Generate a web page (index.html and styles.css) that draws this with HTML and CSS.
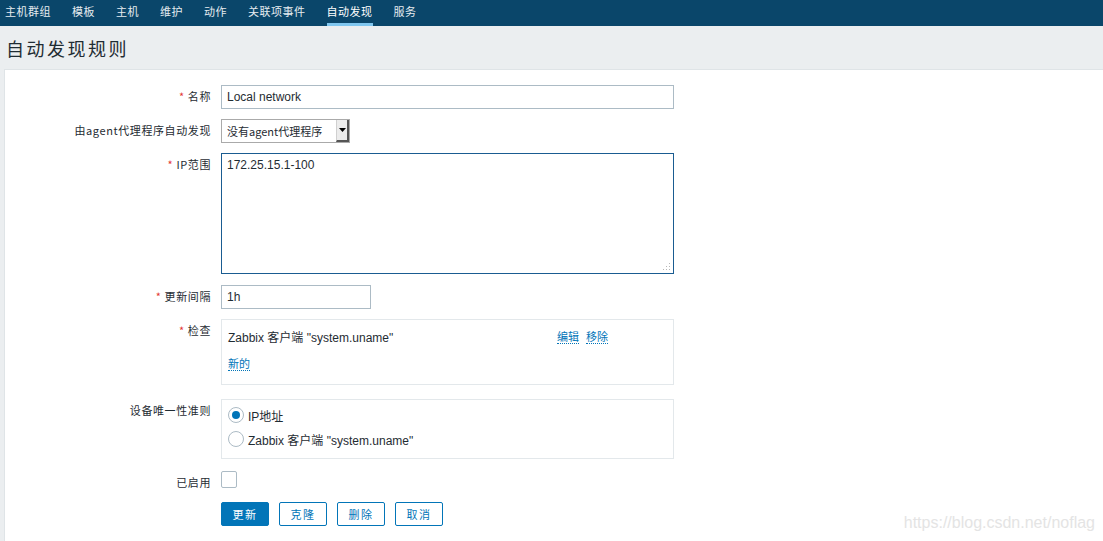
FILE: index.html
```html
<!DOCTYPE html>
<html lang="zh">
<head>
<meta charset="utf-8">
<title>自动发现规则</title>
<link rel="stylesheet" href="styles.css">
</head>
<body>
<nav class="topnav">
  <a class="nav-item">主机群组</a>
  <a class="nav-item">模板</a>
  <a class="nav-item">主机</a>
  <a class="nav-item">维护</a>
  <a class="nav-item">动作</a>
  <a class="nav-item">关联项事件</a>
  <a class="nav-item active">自动发现</a>
  <a class="nav-item">服务</a>
</nav>
<header class="page-header"><h1>自动发现规则</h1></header>
<main class="content">
  <form class="form">
    <label class="lbl"><span class="req">*</span> 名称</label>
    <div class="field"><input class="text wide" type="text" value="Local network"></div>

    <label class="lbl">由agent代理程序自动发现</label>
    <div class="field">
      <div class="select"><span class="select-val">没有agent代理程序</span><span class="select-btn"><svg width="7" height="4" viewBox="0 0 7 4"><path d="M0 0H7L3.5 4Z" fill="#000"/></svg></span></div>
    </div>

    <label class="lbl"><span class="req">*</span> IP范围</label>
    <div class="field"><div class="textarea">172.25.15.1-100<svg class="grip" width="8" height="8" viewBox="0 0 8 8"><g fill="#b8b8b8"><rect x="6" y="0" width="1" height="1"/><rect x="3" y="3" width="1" height="1"/><rect x="6" y="3" width="1" height="1"/><rect x="0" y="6" width="1" height="1"/><rect x="3" y="6" width="1" height="1"/><rect x="6" y="6" width="1" height="1"/></g></svg></div></div>

    <label class="lbl mt1"><span class="req">*</span> 更新间隔</label>
    <div class="field mt1"><input class="text short" type="text" value="1h"></div>

    <label class="lbl"><span class="req">*</span> 检查</label>
    <div class="field">
      <div class="box checks">
        <div class="check-row"><span class="check-name">Zabbix 客户端 "system.uname"</span><span class="links"><a class="link">编辑</a><a class="link">移除</a></span></div>
        <div class="check-row"><a class="link">新的</a></div>
      </div>
    </div>

    <label class="lbl mt4">设备唯一性准则</label>
    <div class="field mt4">
      <div class="box radios">
        <div class="radio-row"><span class="radio on"></span>IP地址</div>
        <div class="radio-row"><span class="radio"></span>Zabbix 客户端 "system.uname"</div>
      </div>
    </div>

    <label class="lbl mt2">已启用</label>
    <div class="field mt2"><span class="checkbox"></span></div>

    <div class="lbl"></div>
    <div class="field buttons">
      <button type="button" class="btn primary">更新</button>
      <button type="button" class="btn">克隆</button>
      <button type="button" class="btn">删除</button>
      <button type="button" class="btn">取消</button>
    </div>
  </form>
  <div class="watermark">https://blog.csdn.net/noflag</div>
</main>
</body>
</html>
```
FILE: styles.css
```css
* { box-sizing: border-box; }
html, body { margin: 0; padding: 0; }
body {
  background: #ebeef0;
  font-family: "Liberation Sans", "Noto Sans CJK SC", sans-serif;
  font-size: 12px;
  color: #1f2c33;
  height: 541px;
  overflow: hidden;
}
.topnav {
  height: 26px;
  background: #0a466a;
  display: flex;
  gap: 21px;
  padding-left: 5px;
}
.nav-item {
  color: #e6ecf0;
  font-family: "Noto Sans CJK SC", sans-serif;
  font-size: 11px;
  letter-spacing: 0.5px;
  line-height: 22px;
  height: 26px;
  border-bottom: 3px solid transparent;
}
.nav-item.active { color: #fff; border-bottom-color: #7fc6ef; }
.page-header {
  height: 43px;
  padding-left: 6px;
  display: flex;
  align-items: center;
}
.page-header h1 {
  margin: 0;
  font-family: "Noto Sans CJK SC", sans-serif;
  font-weight: normal;
  font-size: 18px;
  letter-spacing: 2.5px;
  color: #1f2c33;
}
.content {
  position: relative;
  margin-left: 4px;
  background: #fff;
  border: 1px solid #dfe4e7;
  border-right: none;
  border-bottom: none;
  height: 472px;
  padding-top: 15px;
}
.form {
  display: grid;
  grid-template-columns: 206px 453px;
  column-gap: 10px;
  row-gap: 10px;
}
.lbl {
  text-align: right;
  padding-top: 4px;
  line-height: 15px;
  font-family: "Noto Sans CJK SC", sans-serif;
  font-size: 11px;
  letter-spacing: 0.6px;
  white-space: nowrap;
}
.req { color: #e33734; }
.mt1 { margin-top: 1px; }
.mt4 { margin-top: 4px; }
.mt2 { margin-top: 2px; }
.field { display: flex; }
.text {
  height: 24px;
  border: 1px solid #acbbc5;
  padding: 0 5px;
  font: 12px "Liberation Sans", "Noto Sans CJK SC", sans-serif;
  color: #1f2c33;
  outline: none;
}
.text.wide { width: 453px; }
.text.short { width: 150px; }
.select {
  width: 129px;
  height: 24px;
  border: 1px solid #aaa;
  display: flex;
  align-items: center;
  padding-left: 5px;
  background: #fff;
}
.select-val {
  flex: 1;
  font-family: "Noto Sans CJK SC", sans-serif;
  font-size: 11px;
  white-space: nowrap;
}
.select-btn {
  width: 13px;
  height: 22px;
  background: #ececec;
  border-left: 1px solid #d0d0d0;
  border-right: 2px solid #555;
  border-bottom: 2px solid #555;
  display: flex;
  align-items: center;
  justify-content: center;
}
.textarea {
  position: relative;
  width: 453px;
  height: 121px;
  border: 1px solid #1a5c91;
  padding: 4px 5px;
  line-height: 14px;
}
.grip { position: absolute; right: 2px; bottom: 2px; }
.box {
  width: 453px;
  border: 1px solid #e3e8eb;
  background: #fff;
}
.checks { height: 66px; padding: 7px 6px 0; }
.check-row { display: flex; height: 18px; margin-bottom: 9px; align-items: center; }
.check-name { width: 329px; }
.links { display: flex; gap: 7px; }
.link {
  color: #0275b8;
  font-family: "Noto Sans CJK SC", sans-serif;
  font-size: 11px;
  border-bottom: 1px dotted #0275b8;
  line-height: 14px;
}
.radios { height: 60px; padding: 6px 5px 0; }
.radio-row {
  display: flex;
  align-items: center;
  gap: 4px;
  height: 18px;
  margin-bottom: 6px;
}
.radio {
  width: 16px;
  height: 16px;
  border: 1px solid #acbbc5;
  border-radius: 50%;
  background: #fff;
  position: relative;
  margin-left: 1px;
}
.radio.on::after {
  content: "";
  position: absolute;
  left: 3px; top: 3px;
  width: 8px; height: 8px;
  border-radius: 50%;
  background: #0275b8;
}
.checkbox {
  width: 16px;
  height: 17px;
  border: 1px solid #acbbc5;
  border-radius: 2px;
  background: #fff;
}
.buttons { gap: 10px; margin-top: 2px; }
.btn {
  width: 48px;
  height: 24px;
  border: 1px solid #0275b8;
  background: #fff;
  color: #0275b8;
  font-family: "Noto Sans CJK SC", sans-serif;
  font-size: 11px;
  letter-spacing: 1.5px;
  padding: 0;
  border-radius: 2px;
}
.btn.primary { background: #0275b8; color: #fff; }
.watermark {
  position: absolute;
  right: 8px;
  bottom: 9px;
  color: #e4e4e4;
  font-family: "Liberation Sans", sans-serif;
  font-size: 16px;
}
```
